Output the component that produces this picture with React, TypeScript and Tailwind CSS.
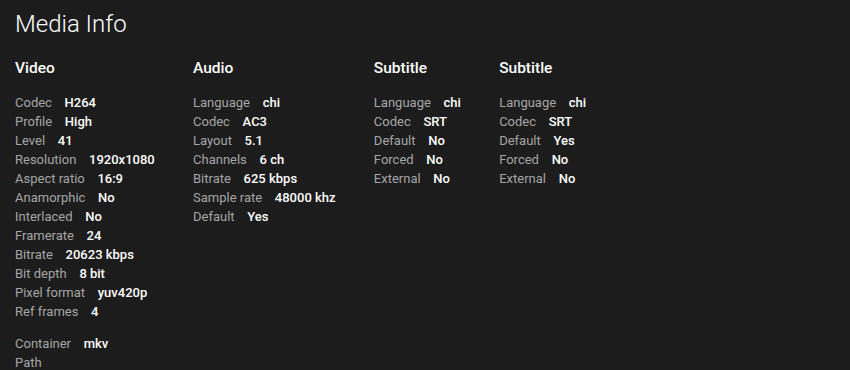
const video: [string, string][] = [
  ["Codec", "H264"],
  ["Profile", "High"],
  ["Level", "41"],
  ["Resolution", "1920x1080"],
  ["Aspect ratio", "16:9"],
  ["Anamorphic", "No"],
  ["Interlaced", "No"],
  ["Framerate", "24"],
  ["Bitrate", "20623 kbps"],
  ["Bit depth", "8 bit"],
  ["Pixel format", "yuv420p"],
  ["Ref frames", "4"],
];

const audio: [string, string][] = [
  ["Language", "chi"],
  ["Codec", "AC3"],
  ["Layout", "5.1"],
  ["Channels", "6 ch"],
  ["Bitrate", "625 kbps"],
  ["Sample rate", "48000 khz"],
  ["Default", "Yes"],
];

const sub1: [string, string][] = [
  ["Language", "chi"],
  ["Codec", "SRT"],
  ["Default", "No"],
  ["Forced", "No"],
  ["External", "No"],
];

const sub2: [string, string][] = [
  ["Language", "chi"],
  ["Codec", "SRT"],
  ["Default", "Yes"],
  ["Forced", "No"],
  ["External", "No"],
];

function Row({ label, value }: { label: string; value?: string }) {
  return (
    <div className="leading-[19px] whitespace-nowrap">
      <span className="text-[#a5a5a5] mr-[12.7px]">{label}</span>
      {value && <span className="text-white font-medium">{value}</span>}
    </div>
  );
}

function Stream({ title, rows }: { title: string; rows: [string, string][] }) {
  return (
    <div className="mr-[38.3px]">
      <h2 className="text-[15.5px] leading-[20px] font-medium text-white mt-[10px] mb-[15px]">
        {title}
      </h2>
      {rows.map(([l, v]) => (
        <Row key={l} label={l} value={v} />
      ))}
    </div>
  );
}

export default function App() {
  return (
    <div
      className="w-[850px] h-[370px] overflow-hidden bg-[#1c1c1c] px-[15px] text-[13px]"
      style={{ fontFamily: "Roboto, 'Noto Sans', sans-serif" }}
    >
      <h1 className="text-[24px] leading-[48px] font-light text-white">Media Info</h1>
      <div className="flex items-start">
        <Stream title="Video" rows={video} />
        <Stream title="Audio" rows={audio} />
        <Stream title="Subtitle" rows={sub1} />
        <Stream title="Subtitle" rows={sub2} />
      </div>
      <div className="mt-[13px]">
        <Row label="Container" value="mkv" />
        <Row label="Path" />
      </div>
    </div>
  );
}
